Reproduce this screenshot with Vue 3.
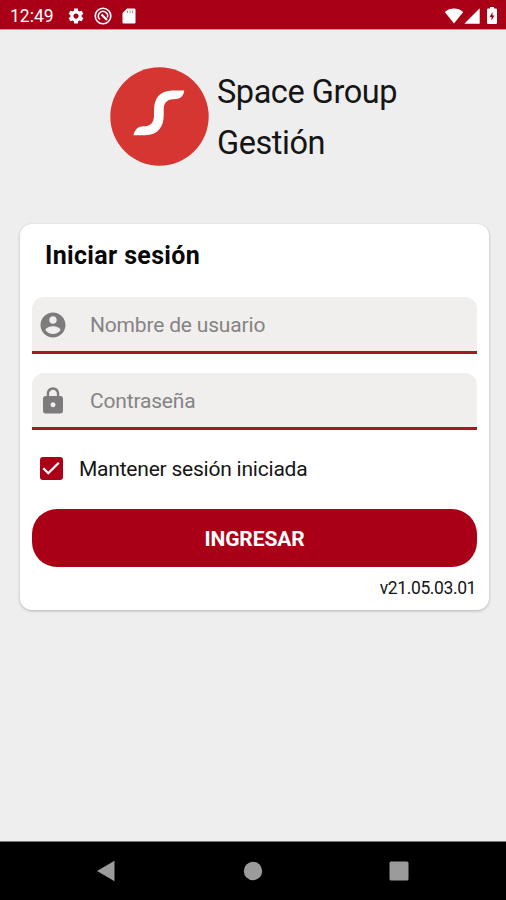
<template>
  <div class="screen">
    <header class="status-bar">
      <span class="clock">12:49</span>
      <div class="notifications">
        <svg width="18" height="18" viewBox="0 0 24 24" fill="#fff">
          <path d="M19.43 12.98c.04-.32.07-.64.07-.98s-.03-.66-.07-.98l2.11-1.65c.19-.15.24-.42.12-.64l-2-3.46c-.12-.22-.39-.3-.61-.22l-2.49 1c-.52-.4-1.08-.73-1.69-.98l-.38-2.65C14.46 2.18 14.25 2 14 2h-4c-.25 0-.46.18-.49.42l-.38 2.65c-.61.25-1.17.59-1.69.98l-2.49-1c-.23-.09-.49 0-.61.22l-2 3.46c-.13.22-.07.49.12.64l2.11 1.65c-.04.32-.07.65-.07.98s.03.66.07.98l-2.11 1.65c-.19.15-.24.42-.12.64l2 3.46c.12.22.39.3.61.22l2.49-1c.52.4 1.08.73 1.69.98l.38 2.65c.03.24.24.42.49.42h4c.25 0 .46-.18.49-.42l.38-2.65c.61-.25 1.17-.59 1.69-.98l2.49 1c.23.09.49 0 .61-.22l2-3.46c.12-.22.07-.49-.12-.64l-2.11-1.65zM12 15.5c-1.93 0-3.5-1.57-3.5-3.5s1.57-3.5 3.5-3.5 3.5 1.57 3.5 3.5-1.57 3.5-3.5 3.5z" />
        </svg>
        <svg width="18" height="18" viewBox="0 0 18 18" fill="none" stroke="#fff">
          <circle cx="9" cy="9" r="7.8" stroke-width="1.6" />
          <path d="M6 12.500A4.600 4.600 0 1 1 13.300 10.600" stroke-width="1.500" />
          <path d="M7.500 7.500l5.500 5.500" stroke-width="2.200" />
        </svg>
        <svg width="14" height="16" viewBox="0 0 14 16">
          <path d="M5 .5h7.200A1.300 1.300 0 0 1 13.500 1.800v12.400a1.300 1.300 0 0 1-1.300 1.300H1.800A1.300 1.300 0 0 1 .5 14.200V5z" fill="#fff" />
          <path d="M5.500 2.500v2.500M8 2.500v2.500M10.500 2.500v2.500" stroke="#a90018" stroke-opacity=".5" stroke-width="1" />
        </svg>
      </div>
      <div class="signals">
        <svg width="20" height="16" viewBox="0 0 20 16" fill="#fff">
          <path d="M10 15.500L.8 4C3.400 1.700 6.500.6 10 .6s6.600 1.100 9.200 3.400z" />
        </svg>
        <svg width="16" height="16" viewBox="0 0 16 16" fill="#fff">
          <path d="M.3 15.700L15.700.3v15.400z" />
        </svg>
        <svg class="battery" width="10" height="17" viewBox="0 0 10 17">
          <path d="M3 0h4v1.500h1.800A1.200 1.200 0 0 1 10 2.700v13.100A1.200 1.200 0 0 1 8.800 17H1.200A1.200 1.200 0 0 1 0 15.800V2.700a1.200 1.200 0 0 1 1.200-1.200H3z" fill="#fff" />
          <path d="M5.500 5L2.500 10h2v3.500L7.500 8.500h-2z" fill="#a90018" />
        </svg>
      </div>
    </header>

    <main class="content">
      <div class="brand">
        <svg class="logo" width="99" height="99" viewBox="0 0 99 99">
          <circle cx="49.500" cy="49.500" r="49.200" fill="#d63631" />
          <path d="M74.300 23.500C73.500 28.500 71 31.800 66 32C57.500 32 54 35 53.700 42V48C53.700 60 48 68 35 68.300H23.500C24.500 63 28 59.500 33 59.300C40.500 59.300 44 56 44 48V43C44 31 50 23.800 62 23.500z" fill="#fff" />
        </svg>
        <h1 class="brand-name">Space Group<br />Gestión</h1>
      </div>

      <form class="card" @submit.prevent>
        <h2 class="title">Iniciar sesión</h2>

        <label class="field">
          <svg width="30" height="30" viewBox="0 0 24 24" fill="#7d7b7b">
            <path d="M12 2C6.480 2 2 6.480 2 12s4.480 10 10 10 10-4.480 10-10S17.520 2 12 2zm0 3c1.660 0 3 1.340 3 3s-1.340 3-3 3-3-1.340-3-3 1.340-3 3-3zm0 14.200c-2.500 0-4.710-1.280-6-3.220.03-1.990 4-3.080 6-3.080 1.990 0 5.970 1.090 6 3.080-1.290 1.940-3.500 3.220-6 3.220z" />
          </svg>
          <input v-model="usuario" type="text" placeholder="Nombre de usuario" />
        </label>

        <label class="field">
          <svg width="30" height="30" viewBox="0 0 24 24" fill="#7d7b7b">
            <path d="M18 8h-1V6c0-2.760-2.240-5-5-5S7 3.240 7 6v2H6c-1.100 0-2 .9-2 2v10c0 1.100.9 2 2 2h12c1.100 0 2-.9 2-2V10c0-1.100-.9-2-2-2zm-6 9c-1.100 0-2-.9-2-2s.9-2 2-2 2 .9 2 2-.9 2-2 2zm3.100-9H8.900V6c0-1.710 1.390-3.100 3.100-3.100 1.710 0 3.100 1.390 3.100 3.100v2z" />
          </svg>
          <input v-model="clave" type="password" placeholder="Contraseña" />
        </label>

        <label class="remember">
          <input v-model="mantener" type="checkbox" />
          <span class="box" :class="{ checked: mantener }">
            <svg v-if="mantener" width="22" height="22" viewBox="0 0 22 22" fill="none" stroke="#fff" stroke-width="2.300">
              <path d="M3.300 11.200l5 5L18.800 5.700" />
            </svg>
          </span>
          <span class="remember-text">Mantener sesión iniciada</span>
        </label>

        <button class="btn-login" type="submit">INGRESAR</button>
        <p class="version">v21.05.03.01</p>
      </form>
    </main>

    <nav class="nav-bar">
      <svg width="20" height="22" viewBox="0 0 20 22" fill="#9b9b9b">
        <path d="M1 11L18.500.8v20.400z" />
      </svg>
      <svg width="20" height="20" viewBox="0 0 20 20" fill="#9b9b9b">
        <circle cx="10" cy="10" r="9.200" />
      </svg>
      <svg width="20" height="20" viewBox="0 0 20 20" fill="#9b9b9b">
        <rect x=".5" y=".5" width="19" height="19" rx="1.500" />
      </svg>
    </nav>
  </div>
</template>

<script setup>
import { ref } from 'vue';

const usuario = ref('');
const clave = ref('');
const mantener = ref(true);
</script>

<style>
body {
  margin: 0;
  background: #eee;
}
</style>

<style scoped>
.screen {
  display: flex;
  flex-direction: column;
  width: 506px;
  height: 900px;
  overflow: hidden;
  background: #eee;
  color: #151515;
  font-family: Roboto, sans-serif;
}

.screen * {
  box-sizing: border-box;
}

svg {
  display: block;
  flex-shrink: 0;
}

.status-bar {
  display: flex;
  align-items: center;
  height: 30px;
  padding: 2px 9px 0 10px;
  background: #a90018;
  border-bottom: 1px solid #d98e98;
}

.clock {
  width: 57px;
  color: #fff;
  font-size: 17.5px;
}

.notifications {
  display: flex;
  align-items: center;
  gap: 9px;
}

.notifications svg:last-child {
  margin-left: 1px;
}

.signals {
  display: flex;
  align-items: center;
  gap: 0;
  margin-left: auto;
}

.battery {
  margin-left: 7px;
}

.content {
  flex: 1;
  padding: 37px 17px 0 20px;
}

.brand {
  display: flex;
  gap: 8px;
  height: 157px;
  padding-left: 90px;
}

.brand-name {
  margin: 0;
  font-size: 32.5px;
  font-weight: 400;
  line-height: 50.5px;
  letter-spacing: -0.45px;
}

.card {
  display: flex;
  flex-direction: column;
  width: 469px;
  height: 386px;
  padding: 12px 12px 8px;
  background: #fff;
  border-radius: 12px;
  box-shadow: 0 1px 3px rgba(0, 0, 0, 0.25);
}

.title {
  height: 61px;
  margin: 0;
  padding-left: 13px;
  color: #080808;
  font-size: 25px;
  font-weight: 700;
  line-height: 39px;
  letter-spacing: 0.35px;
}

.field {
  display: flex;
  align-items: center;
  gap: 22px;
  height: 57px;
  margin-bottom: 19px;
  padding: 1px 6px 0;
  background: #f1eeee;
  border-bottom: 3px solid #a51a22;
  border-radius: 12px 12px 0 0;
}

.field input {
  flex: 1;
  min-width: 0;
  padding: 0;
  border: none;
  outline: none;
  background: transparent;
  color: #151515;
  font-family: inherit;
  font-size: 21px;
  letter-spacing: -0.18px;
}

.field input::placeholder {
  color: #858383;
  opacity: 1;
}

.remember {
  display: flex;
  align-items: center;
  gap: 16px;
  height: 39px;
  margin-bottom: 21px;
  padding-left: 8px;
  font-size: 21px;
  letter-spacing: -0.22px;
  cursor: pointer;
}

.remember input {
  display: none;
}

.box {
  width: 23px;
  height: 23px;
  border: 2px solid #777;
  border-radius: 3px;
}

.box.checked {
  border: none;
  background: #a90018;
}

.btn-login {
  height: 58px;
  padding: 2px 0 0;
  border: none;
  border-radius: 25px;
  background: #a90018;
  color: #fff;
  font-family: inherit;
  font-size: 21px;
  font-weight: 700;
  letter-spacing: -0.1px;
  cursor: pointer;
}

.version {
  margin: 9px 1px 0;
  font-size: 17.5px;
  line-height: 24px;
  letter-spacing: -0.4px;
  text-align: right;
}

.nav-bar {
  display: flex;
  align-items: center;
  justify-content: space-between;
  height: 59px;
  padding: 0 97px 0 96px;
  background: #000;
  border-top: 1px solid #777;
}
</style>
